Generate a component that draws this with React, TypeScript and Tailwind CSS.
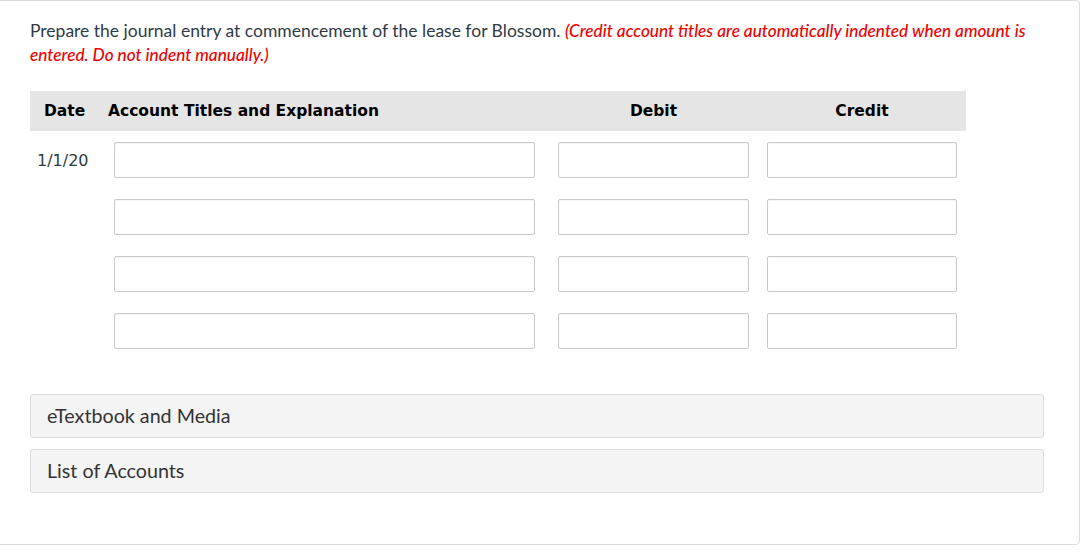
const rows = [0, 1, 2, 3];

function Field({ className }: { className: string }) {
  return (
    <input
      type="text"
      className={`h-[36px] rounded-[2px] border border-[#c9c9c9] bg-white px-2 shadow-[inset_0_1px_1px_rgba(0,0,0,0.04)] outline-none ${className}`}
    />
  );
}

export default function App() {
  return (
    <div className="h-[554px] w-[1089px] overflow-hidden bg-white">
      <div className="ml-[-6px] h-[545px] w-[1086px] rounded-r-[4px] rounded-b-[4px] border border-[#dcdcdc] bg-white pl-[35px] pt-[18px]">
        <p className="w-[1000px] font-['Lato',sans-serif] text-[17.5px] leading-[24px] text-[#2f3b45]">
          Prepare the journal entry at commencement of the lease for Blossom.{" "}
          <span className="text-[17.2px] font-medium italic text-[#f00000]">
            (Credit account titles are automatically indented when amount is entered. Do not indent manually.)
          </span>
        </p>

        <div className="mt-[24px] font-['DejaVu_Sans',Verdana,sans-serif]">
          <div className="flex h-[40px] w-[936px] items-center bg-[#e5e5e5] pt-[1px] text-[15.5px] font-bold text-black">
            <div className="w-[78px] pl-[14px]">Date</div>
            <div className="w-[450px]">Account Titles and Explanation</div>
            <div className="w-[191px] text-center">Debit</div>
            <div className="w-[18px]" />
            <div className="w-[190px] text-center">Credit</div>
          </div>

          <div className="mt-[11px] flex flex-col gap-[21px]">
            {rows.map((r) => (
              <div key={r} className="flex items-center">
                <div className="w-[84px] pl-[7px] pt-[1px] text-[16px] text-[#2d3b45]">{r === 0 ? "1/1/20" : ""}</div>
                <Field className="w-[421px]" />
                <Field className="ml-[23px] w-[191px]" />
                <Field className="ml-[18px] w-[190px]" />
              </div>
            ))}
          </div>
        </div>

        <div className="mt-[45px] flex w-[1014px] flex-col gap-[11px] font-['Lato',sans-serif] text-[19.7px] text-[#333]">
          <div className="flex h-[44px] items-center rounded-[3px] border border-[#dddddd] bg-[#f4f4f4] pl-[16px]">
            eTextbook and Media
          </div>
          <div className="flex h-[44px] items-center rounded-[3px] border border-[#dddddd] bg-[#f4f4f4] pl-[16px]">
            List of Accounts
          </div>
        </div>
      </div>
    </div>
  );
}
